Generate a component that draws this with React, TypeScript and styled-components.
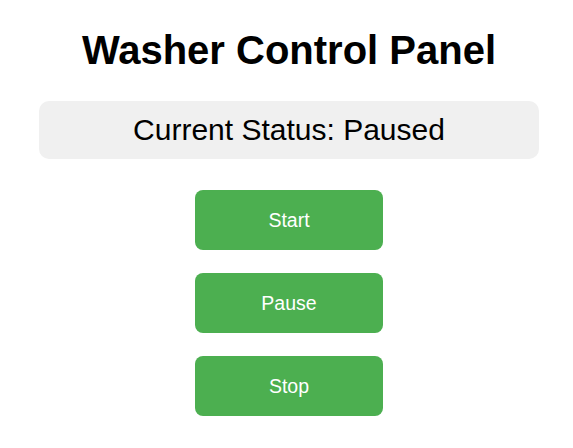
import React, { useState } from 'react'
import styled, { createGlobalStyle } from 'styled-components'

const GlobalStyle = createGlobalStyle`
  html, body {
    margin: 0;
    padding: 0;
    background: #ffffff;
    font-family: 'Liberation Sans', Arial, sans-serif;
  }
`

const Page = styled.div`
  display: flex;
  flex-direction: column;
  align-items: center;
  padding: 27px 0 0 5px;
`

const Title = styled.h1`
  margin: 0;
  font-size: 40px;
  line-height: 46px;
  font-weight: bold;
  color: #000;
`

const StatusBox = styled.div`
  box-sizing: border-box;
  width: 500px;
  height: 58px;
  margin-top: 28px;
  display: flex;
  align-items: center;
  justify-content: center;
  background: #f0f0f0;
  border-radius: 10px;
  font-size: 30px;
  color: #000;
`

const Controls = styled.div`
  display: flex;
  flex-direction: column;
  gap: 23px;
  margin-top: 31px;
`

const ControlButton = styled.button`
  width: 188px;
  height: 60px;
  border: none;
  border-radius: 8px;
  background: #4caf50;
  color: #fff;
  font-family: 'Liberation Sans', Arial, sans-serif;
  font-size: 19.5px;
  cursor: pointer;
`

const actions = ['Start', 'Pause', 'Stop']
const labels: Record<string, string> = { Start: 'Running', Pause: 'Paused', Stop: 'Stopped' }

export default function App() {
  const [status, setStatus] = useState('Paused')
  return (
    <>
      <GlobalStyle />
      <Page>
        <Title>Washer Control Panel</Title>
        <StatusBox>Current Status: {status}</StatusBox>
        <Controls>
          {actions.map((a) => (
            <ControlButton key={a} onClick={() => setStatus(labels[a])}>
              {a}
            </ControlButton>
          ))}
        </Controls>
      </Page>
    </>
  )
}
